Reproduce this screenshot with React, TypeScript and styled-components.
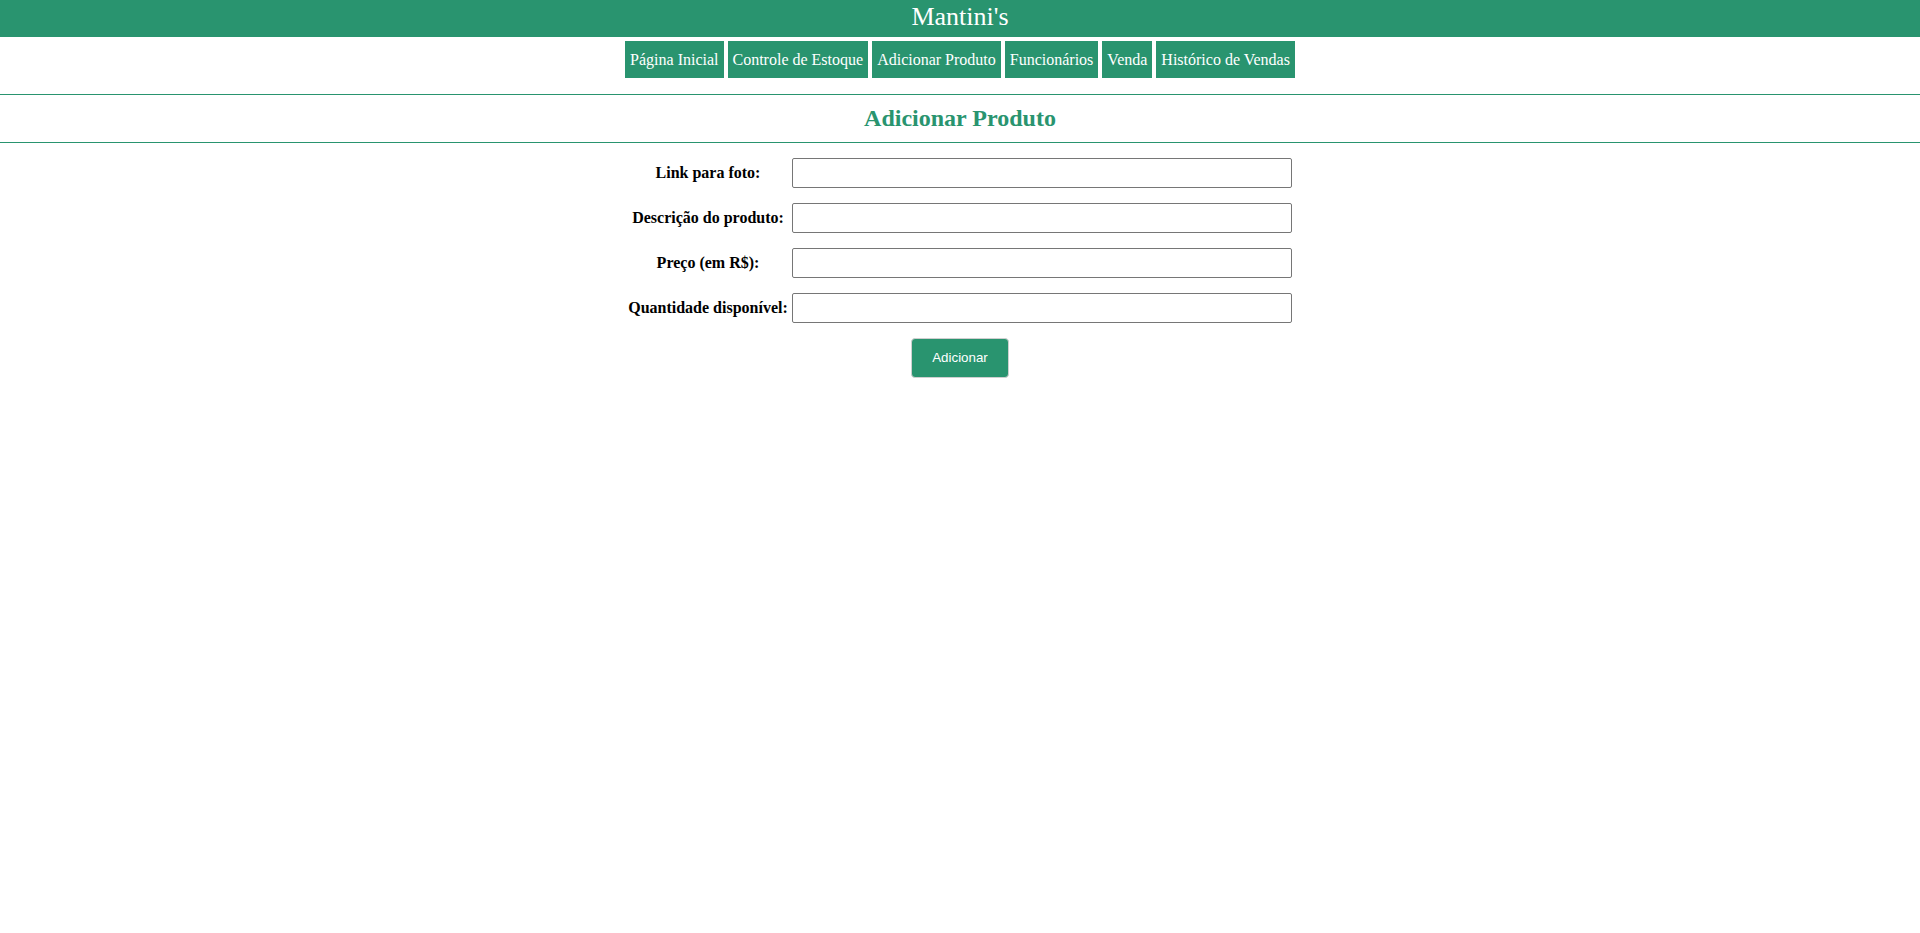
import React, { useState } from 'react';
import styled, { createGlobalStyle } from 'styled-components';

const green = '#29946f';

const GlobalStyle = createGlobalStyle`
  body {
    margin: 0;
    background: #fff;
    font-family: "Liberation Serif", "Times New Roman", serif;
  }
`;

const Header = styled.header`
  background-color: ${green};
  color: #fff;
  text-align: center;
  font-size: 26px;
  line-height: 34px;
  padding-bottom: 3px;
`;

const Nav = styled.nav`
  display: flex;
  justify-content: center;
  gap: 4px;
  padding-top: 4px;
`;

const NavLink = styled.a`
  background-color: ${green};
  color: #fff;
  font-size: 16px;
  line-height: 19px;
  padding: 9px 5px;
  text-decoration: none;
  cursor: pointer;
`;

const TitleBar = styled.div`
  margin-top: 16px;
  border-top: 1px solid ${green};
  border-bottom: 1px solid ${green};
  h2 {
    margin: 0;
    padding: 10px 0;
    font-size: 24px;
    line-height: 27px;
    color: ${green};
    text-align: center;
  }
`;

const Form = styled.form`
  display: grid;
  grid-template-columns: max-content 500px;
  justify-content: center;
  align-items: center;
  column-gap: 4px;
  row-gap: 15px;
  margin-top: 15px;
`;

const Label = styled.label`
  font-weight: bold;
  font-size: 16px;
  text-align: center;
`;

const Input = styled.input`
  box-sizing: border-box;
  height: 30px;
  border: 1px solid #767676;
  border-radius: 2px;
  padding: 0 4px;
  font-size: 14px;
`;

const Submit = styled.button`
  grid-column: 1 / -1;
  justify-self: center;
  background-color: ${green};
  color: #fff;
  font-family: "Liberation Sans", Arial, sans-serif;
  font-size: 13.33px;
  line-height: 16px;
  padding: 11px 20px;
  border: 1px solid #cfcfcf;
  border-radius: 4px;
  cursor: pointer;
`;

const links = [
  'Página Inicial',
  'Controle de Estoque',
  'Adicionar Produto',
  'Funcionários',
  'Venda',
  'Histórico de Vendas',
];

const fields = [
  { id: 'foto', label: 'Link para foto:' },
  { id: 'descricao', label: 'Descrição do produto:' },
  { id: 'preco', label: 'Preço (em R$):' },
  { id: 'quantidade', label: 'Quantidade disponível:' },
];

const App: React.FC = () => {
  const [values, setValues] = useState<Record<string, string>>({});

  return (
    <>
      <GlobalStyle />
      <Header>Mantini's</Header>
      <Nav>
        {links.map((link) => (
          <NavLink key={link}>{link}</NavLink>
        ))}
      </Nav>
      <TitleBar>
        <h2>Adicionar Produto</h2>
      </TitleBar>
      <Form onSubmit={(e) => e.preventDefault()}>
        {fields.map((field) => (
          <React.Fragment key={field.id}>
            <Label htmlFor={field.id}>{field.label}</Label>
            <Input
              id={field.id}
              value={values[field.id] || ''}
              onChange={(e) =>
                setValues({ ...values, [field.id]: e.target.value })
              }
            />
          </React.Fragment>
        ))}
        <Submit type="submit">Adicionar</Submit>
      </Form>
    </>
  );
};

export default App;
